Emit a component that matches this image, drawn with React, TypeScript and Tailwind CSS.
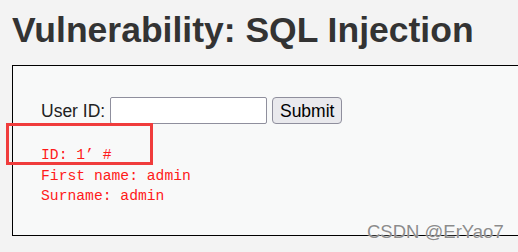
export default function App() {
  return (
    <div className="relative h-[252px] w-[518px] overflow-hidden bg-[#f3f3f3] font-['Liberation_Sans',Arial,sans-serif] text-[#333]">
      {/* Page heading */}
      <h1 className="pl-[12px] pt-[13px] text-[35.5px] font-bold leading-[35px] text-[#333]">
        Vulnerability: SQL Injection
      </h1>

      {/* Vulnerable form panel */}
      <div className="ml-[12px] mt-[17px] h-[171px] border border-r-0 border-black bg-[#f8f9f9] pl-[28px] pt-[31px]">
        <form className="flex h-[27px] items-center" onSubmit={(e) => e.preventDefault()}>
          <span className="text-[17.5px] leading-[20px] text-[#222]">User ID:</span>
          <input
            type="text"
            className="ml-[5px] h-[27px] w-[157px] rounded-[2px] border border-[#8f8f9d] bg-white"
          />
          <button
            type="submit"
            className="ml-[5px] h-[27px] w-[70px] rounded-[4px] border border-[#8f8f9d] bg-[#e9e9ed] text-[17.5px] leading-[20px] text-black"
          >
            Submit
          </button>
        </form>

        <pre className="mt-[21px] font-['Liberation_Mono','Courier_New',monospace] text-[14.7px] leading-[20.5px] text-[#ff1a1a]">
          {"ID: 1’ #\nFirst name: admin\nSurname: admin"}
        </pre>
      </div>

      {/* Highlight box drawn over the result */}
      <div className="absolute left-[6px] top-[123px] h-[42px] w-[147px] border-[3px] border-[#f03c3c]" />

      {/* Watermark */}
      <div className="absolute left-[367px] top-[223px] text-[18.5px] leading-[18px] text-[#8c8c8c] [text-shadow:0_0_2px_#ffffff]">
        CSDN @ErYao7
      </div>
    </div>
  );
}
